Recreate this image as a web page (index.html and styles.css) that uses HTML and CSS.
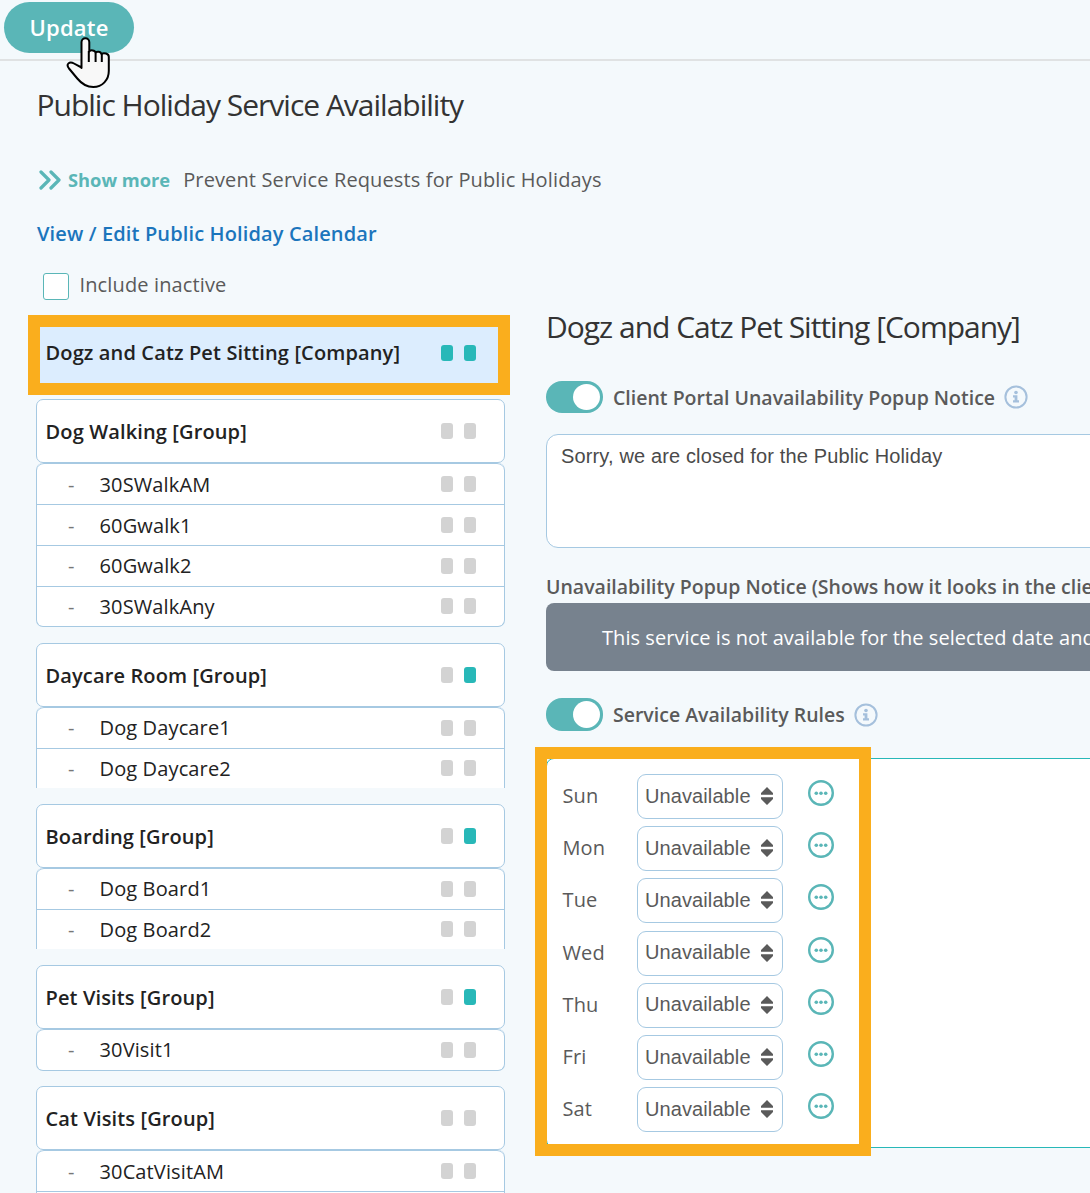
FILE: index.html
```
<!DOCTYPE html>
<html lang="en">

<head>
  <meta charset="UTF-8">
  <meta name="viewport" content="width=device-width, initial-scale=1.0">
  <title>Public Holiday Service Availability</title>
  <link rel="stylesheet" href="styles.css">
</head>

<body>
  <svg class="sprite" aria-hidden="true">
    <symbol id="info" viewBox="0 0 24 24">
      <circle cx="12" cy="12" r="10.6" fill="none" stroke="currentColor" stroke-width="2"/>
      <circle cx="12" cy="7.5" r="1.8" fill="currentColor"/>
      <path d="M9 10.300h4.400v5h1.600v2.200H9v-2.200h1.600v-2.800H9z" fill="currentColor"/>
    </symbol>
    <symbol id="dots" viewBox="0 0 26 26">
      <circle cx="13" cy="13" r="11.8" fill="none" stroke="currentColor" stroke-width="2.4"/>
      <g fill="currentColor">
        <circle cx="8.3" cy="13.2" r="1.8"/>
        <circle cx="13" cy="13.2" r="1.8"/>
        <circle cx="17.7" cy="13.2" r="1.8"/>
      </g>
    </symbol>
    <symbol id="sort" viewBox="0 0 12 18">
      <path d="M6 0l6 6v1.7H0V6zM6 18l6-6v-1.7H0V12z" fill="currentColor"/>
    </symbol>
  </svg>

  <header class="toolbar">
    <button class="update">Update</button>
    <svg class="pointer" viewBox="0 0 44 52">
      <path d="M15.500 31V5.200a3.900 3.900 0 0 1 7.800 0V14.500c1-1.800 5.800-1.500 6.300 1 1.500-1.200 5-1 5.800 1.300 2.500-1.200 7.400-.4 7.400 3V34c0 9-6.500 16-15.500 16-7 0-11.500-3-16-8.500L3 31.500C-.5 27 3.500 24 8 26.500l7.500 4z" fill="#f8f8f8" stroke="#000" stroke-width="2" stroke-linejoin="round"/>
      <path d="M22.800 14v11M29.600 15.500V25M35.800 17V25" fill="none" stroke="#000" stroke-width="2"/>
    </svg>
  </header>

  <main>
    <h1>Public Holiday Service Availability</h1>
    <p class="intro">
      <svg class="chevrons" viewBox="0 0 22 20"><path d="M2 2l8 8-8 8M12 2l8 8-8 8" fill="none" stroke="currentColor" stroke-width="3.2" stroke-linecap="round" stroke-linejoin="round"/></svg>
      <strong>Show more</strong>
      <span>Prevent Service Requests for Public Holidays</span>
    </p>
    <a class="calendar" href="#">View / Edit Public Holiday Calendar</a>
    <label class="inactive"><input type="checkbox"><span>Include inactive</span></label>

    <div class="columns">
      <nav class="services">
        <div class="company"><span>Dogz and Catz Pet Sitting [Company]</span><i class="on"></i><i class="on"></i></div>

        <section>
          <h3><span>Dog Walking [Group]</span><i></i><i></i></h3>
          <ul class="closed">
            <li><span>30SWalkAM</span><i></i><i></i></li>
            <li><span>60Gwalk1</span><i></i><i></i></li>
            <li><span>60Gwalk2</span><i></i><i></i></li>
            <li><span>30SWalkAny</span><i></i><i></i></li>
          </ul>
        </section>

        <section>
          <h3><span>Daycare Room [Group]</span><i></i><i class="on"></i></h3>
          <ul>
            <li><span>Dog Daycare1</span><i></i><i></i></li>
            <li><span>Dog Daycare2</span><i></i><i></i></li>
          </ul>
        </section>

        <section>
          <h3><span>Boarding [Group]</span><i></i><i class="on"></i></h3>
          <ul>
            <li><span>Dog Board1</span><i></i><i></i></li>
            <li><span>Dog Board2</span><i></i><i></i></li>
          </ul>
        </section>

        <section>
          <h3><span>Pet Visits [Group]</span><i></i><i class="on"></i></h3>
          <ul class="closed">
            <li><span>30Visit1</span><i></i><i></i></li>
          </ul>
        </section>

        <section>
          <h3><span>Cat Visits [Group]</span><i></i><i></i></h3>
          <ul class="closed">
            <li><span>30CatVisitAM</span><i></i><i></i></li>
            <li></li>
          </ul>
        </section>
      </nav>

      <div class="settings">
        <h2>Dogz and Catz Pet Sitting [Company]</h2>
        <div class="option">
          <span class="toggle"></span>
          <span class="label">Client Portal Unavailability Popup Notice</span>
          <svg class="info"><use href="#info"/></svg>
        </div>
        <textarea>Sorry, we are closed for the Public Holiday</textarea>
        <p class="preview-label">Unavailability Popup Notice (Shows how it looks in the client portal)</p>
        <div class="preview">This service is not available for the selected date and time</div>
        <div class="option rules-option">
          <span class="toggle"></span>
          <span>Service Availability Rules</span>
          <svg class="info"><use href="#info"/></svg>
        </div>
        <div class="rules">
          <div class="day"><span>Sun</span><button class="select">Unavailable<svg><use href="#sort"/></svg></button><svg class="more"><use href="#dots"/></svg></div>
          <div class="day"><span>Mon</span><button class="select">Unavailable<svg><use href="#sort"/></svg></button><svg class="more"><use href="#dots"/></svg></div>
          <div class="day"><span>Tue</span><button class="select">Unavailable<svg><use href="#sort"/></svg></button><svg class="more"><use href="#dots"/></svg></div>
          <div class="day"><span>Wed</span><button class="select">Unavailable<svg><use href="#sort"/></svg></button><svg class="more"><use href="#dots"/></svg></div>
          <div class="day"><span>Thu</span><button class="select">Unavailable<svg><use href="#sort"/></svg></button><svg class="more"><use href="#dots"/></svg></div>
          <div class="day"><span>Fri</span><button class="select">Unavailable<svg><use href="#sort"/></svg></button><svg class="more"><use href="#dots"/></svg></div>
          <div class="day"><span>Sat</span><button class="select">Unavailable<svg><use href="#sort"/></svg></button><svg class="more"><use href="#dots"/></svg></div>
        </div>
      </div>
    </div>
  </main>
</body>

</html>
```
FILE: styles.css
```
*,
*::before,
*::after {
  box-sizing: border-box;
}

body {
  margin: 0;
  height: 1193px;
  overflow: hidden;
  font: 20px/28px "Open Sans", sans-serif;
  letter-spacing: 0.13px;
  background: #f4f9fc;
  color: #5a5a5a;
}

h1,
h2,
h3,
p,
ul {
  margin: 0;
  padding: 0;
}

.sprite {
  position: absolute;
  width: 0;
  height: 0;
}

.toolbar {
  position: relative;
  height: 61px;
  padding: 2px 4px;
  border-bottom: 2px solid #e0e2e3;
}

.update {
  display: block;
  width: 130px;
  height: 51px;
  padding: 0 0 2px;
  border: 0;
  border-radius: 26px;
  background: #5ab6b7;
  color: #fff;
  font: 600 22px "Open Sans", sans-serif;
  letter-spacing: 0.2px;
}

/* hand cursor resting on the button */
.pointer {
  position: absolute;
  z-index: 2;
  left: 66px;
  top: 37px;
  width: 44px;
  height: 52px;
}

main {
  padding: 24px 0 0 36px;
}

h1,
h2 {
  font-size: 30px;
  font-weight: 400;
  line-height: 40px;
  letter-spacing: -1px;
  color: #333;
  white-space: nowrap;
}

h1 {
  padding-left: 0.5px;
}

.intro {
  display: flex;
  align-items: center;
  margin-top: 41px;
  padding-left: 3px;
}

.chevrons {
  width: 22px;
  height: 20px;
  color: #5ab6b7;
}

.intro strong {
  margin: 0 13px 0 7px;
  font-size: 18.3px;
  letter-spacing: 0;
  color: #5ab6b7;
}

.calendar {
  display: block;
  margin-top: 26px;
  padding-left: 1px;
  font-weight: 600;
  color: #1b75bc;
  text-decoration: none;
}

.inactive {
  display: flex;
  align-items: center;
  height: 29px;
  margin-top: 23px;
  padding-left: 7px;
}

.inactive input {
  appearance: none;
  width: 26px;
  height: 27px;
  margin: 2px 10.5px 0 0;
  border: 1px solid #5ab6b7;
  border-radius: 3px;
  background: #fff;
}

.inactive span {
  padding-bottom: 2px;
}

.columns {
  display: grid;
  grid-template-columns: 469px 1fr;
  gap: 41px;
}

.services {
  padding-top: 21px;
  color: #222;
}

.company {
  position: relative;
  height: 64px;
  background: #dcedfe;
}

/* orange frames around the highlighted areas */
.company::after,
.rules::after {
  content: "";
  position: absolute;
  border: 12px solid #faae1d;
}

.company::after {
  inset: -6px -5px -10px -8px;
}

.company,
h3,
li {
  display: flex;
  align-items: center;
}

.company {
  padding: 0 29px 0 9.5px;
  font-weight: 600;
}

h3 {
  padding: 0 28px 0 8.5px;
  font-size: 20px;
  font-weight: 600;
}

.services span {
  flex: 1;
}

h3 span,
li span {
  padding-top: 1.5px;
}

.services i {
  width: 12px;
  height: 16px;
  margin-left: 11px;
  border-radius: 3px;
  background: #d3d3d3;
}

.services .on {
  background: #28b8b8;
}

.company + section {
  margin-top: 14.3px;
}

section {
  margin-bottom: 15.5px;
}

h3 {
  height: 64px;
  border: 1px solid #a6c9e2;
  border-radius: 7px;
  background: #fff;
}

ul {
  border: solid #a6c9e2;
  border-width: 0 1px;
  border-radius: 7px 7px 0 0;
  background: #fff;
  list-style: none;
  overflow: hidden;
}

li {
  height: 40.75px;
  padding: 0 28px 0 31px;
  border-top: 1px solid #a6c9e2;
}

li:first-child {
  border-radius: 7px 7px 0 0;
}

li::before {
  content: "-";
  width: 31.5px;
  padding-top: 1.5px;
  color: #777;
}

.closed {
  border-bottom-width: 1px;
  border-radius: 7px;
}

.settings {
  padding-top: 7px;
  white-space: nowrap;
}

.option {
  display: flex;
  align-items: center;
  height: 33px;
  margin-top: 33px;
  font-size: 19.5px;
  font-weight: 600;
  letter-spacing: 0;
}

.option .label {
  padding-top: 2px;
}

.toggle {
  width: 57px;
  height: 32px;
  margin-right: 10px;
  padding: 3px;
  border-radius: 16px;
  background: #5ab6b7;
}

.toggle::after {
  content: "";
  display: block;
  width: 27px;
  height: 26px;
  margin-left: 24px;
  border-radius: 50%;
  background: #fff;
}

.info {
  width: 24px;
  height: 24px;
  margin-left: 9px;
  color: #a5c0dc;
}

textarea {
  display: block;
  width: 600px;
  height: 114px;
  margin-top: 21px;
  padding: 9px 14px;
  border: 1px solid #a6c9e2;
  border-radius: 12px;
  background: #fff;
  color: #4a4a4a;
  font: 20px/24px "Liberation Sans", sans-serif;
  letter-spacing: 0.14px;
  resize: none;
}

.preview-label {
  margin-top: 25px;
  font-size: 19.5px;
  font-weight: 600;
  letter-spacing: 0;
}

.preview {
  height: 68px;
  margin-top: 2px;
  padding-left: 56px;
  border-radius: 8px 0 0 8px;
  background: #77828e;
  color: #fff;
  letter-spacing: 0.06px;
  line-height: 69px;
}

.rules-option {
  margin-top: 27px;
}

.rules-option .toggle {
  height: 33px;
}

.rules-option .toggle::after {
  height: 27px;
}

.rules {
  position: relative;
  width: 600px;
  height: 390px;
  margin-top: 27px;
  padding: 15px 0 0 15.5px;
  border: 1px solid #28b8b8;
  border-radius: 8px;
  background: #fff;
}

.rules::after {
  left: -12px;
  top: -12px;
  width: 336px;
  height: 409px;
}

.day {
  display: flex;
  align-items: center;
  height: 45px;
  margin-bottom: 7.22px;
}

.day span {
  width: 74.5px;
  padding-bottom: 1px;
}

.select {
  display: flex;
  align-items: center;
  justify-content: space-between;
  width: 146px;
  height: 45px;
  padding: 0 9px 1px 7px;
  border: 1px solid #a6c9e2;
  border-radius: 9px;
  background: #fff;
  color: #5a5a5a;
  font: 20px "Liberation Sans", sans-serif;
  letter-spacing: 0.1px;
}

.select svg {
  width: 12px;
  height: 18px;
}

.more {
  width: 26px;
  height: 26px;
  margin: -7px 0 0 25px;
  color: #5ab6b7;
}
```
